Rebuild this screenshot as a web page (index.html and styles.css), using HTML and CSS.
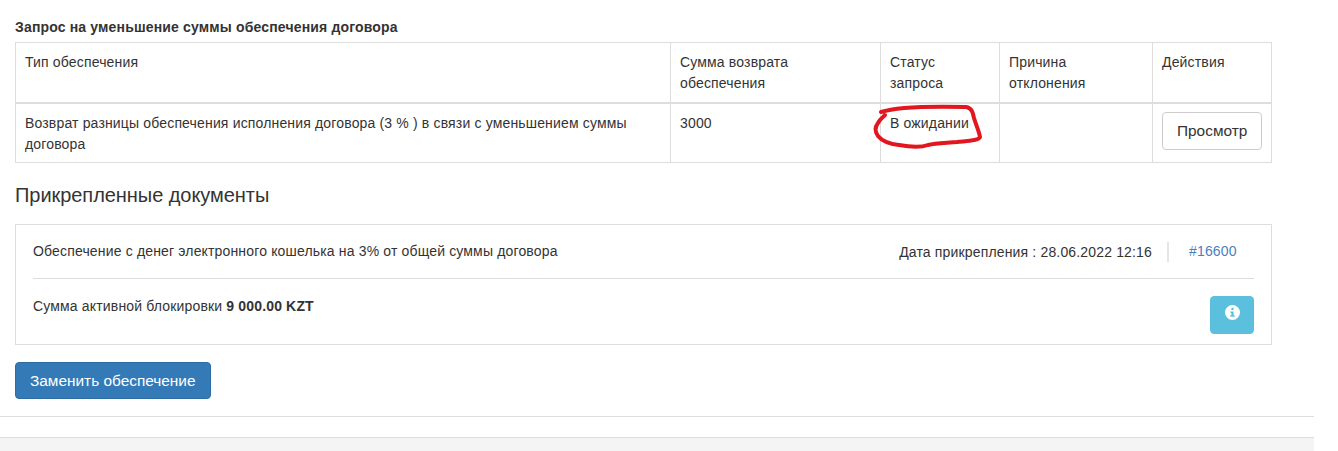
FILE: index.html
```html
<!DOCTYPE html>
<html lang="ru">
<head>
<meta charset="utf-8">
<title>Запрос на уменьшение суммы обеспечения договора</title>
<link rel="stylesheet" href="styles.css">
</head>
<body>
<div class="page">
  <main class="content">
    <h4 class="table-title">Запрос на уменьшение суммы обеспечения договора</h4>
    <div class="table-wrap">
      <table class="data-table">
        <colgroup>
          <col class="col-type"><col class="col-sum"><col class="col-status"><col class="col-reason"><col class="col-actions">
        </colgroup>
        <thead>
          <tr>
            <th>Тип обеспечения</th>
            <th>Сумма возврата обеспечения</th>
            <th>Статус запроса</th>
            <th>Причина отклонения</th>
            <th>Действия</th>
          </tr>
        </thead>
        <tbody>
          <tr>
            <td>Возврат разницы обеспечения исполнения договора (3 % ) в связи с уменьшением суммы договора</td>
            <td>3000</td>
            <td>В ожидании</td>
            <td></td>
            <td><button class="btn btn-default" type="button">Просмотр</button></td>
          </tr>
        </tbody>
      </table>
    </div>
    <h3 class="docs-title">Прикрепленные документы</h3>
    <section class="doc-panel">
      <div class="doc-head">
        <span class="doc-name">Обеспечение с денег электронного кошелька на 3% от общей суммы договора</span>
        <span class="doc-date">Дата прикрепления : 28.06.2022 12:16</span>
        <a class="doc-link" href="#">#16600</a>
      </div>
      <div class="doc-body">
        <span class="doc-sum">Сумма активной блокировки <b>9 000.00 KZT</b></span>
        <button class="btn btn-info" type="button" aria-label="Информация">
          <svg class="info-icon" viewBox="0 0 16 16" width="15" height="15" aria-hidden="true">
            <path fill="#fff" fill-rule="evenodd" d="M8 0a8 8 0 1 1 0 16A8 8 0 0 1 8 0Zm-1.2 3v2.400h2.400V3H6.800Zm-1 3.800v1.700h1v2.300h-1v1.700h4.400v-1.700h-1V6.800H5.800Z"/>
          </svg>
        </button>
      </div>
    </section>
    <button class="btn btn-primary" type="button">Заменить обеспечение</button>
  </main>
  <div class="gap"></div>
  <footer class="footer"></footer>
</div>
<svg class="scribble" width="120" height="60" viewBox="870 95 120 60" aria-hidden="true">
  <path d="M881 112C893 108 925 106 966 107C972 108 973 113 974 118C976 125 979 131 980 137C979 141 965 141 957 142C945 143 935 143 928 145C920 148 910 147 899 145C890 144 882 141 878 136C875 132 875 127 878 123C880 119 883 117 885 115" fill="none" stroke="#e2161e" stroke-width="4" stroke-linecap="round" stroke-linejoin="round"/>
</svg>
</body>
</html>
```
FILE: styles.css
```css
* { box-sizing: border-box; }
html, body { margin: 0; padding: 0; background: #fff; height: 451px; overflow: hidden; }
body {
  position: relative;
  font-family: "Liberation Sans", Arial, sans-serif;
  font-size: 14px;
  line-height: 21px;
  letter-spacing: 0.16px;
  color: #333;
}
.page { width: 1314px; }
.content { padding: 17px 42px 17px 15px; }
.table-title {
  margin: 0 0 5px;
  font-size: 14px;
  line-height: 20px;
  font-weight: 700;
}
.data-table {
  width: 1256px;
  table-layout: fixed;
  border-collapse: collapse;
}
.col-type { width: 655px; }
.col-sum { width: 210px; }
.col-status { width: 119px; }
.col-reason { width: 153px; }
.col-actions { width: 119px; }
.data-table th, .data-table td {
  border: 1px solid #ddd;
  padding: 9px 9px 7px;
  text-align: left;
  vertical-align: top;
  font-weight: 400;
}
.data-table th { border-bottom: 2px solid #ddd; padding-bottom: 8px; }
.btn {
  display: inline-block;
  border-radius: 4px;
  font-family: inherit;
  font-size: 15.4px;
  line-height: 24px;
  letter-spacing: 0;
  padding: 6px 14px;
  border: 1px solid transparent;
}
.btn-default { background: #fff; border-color: #ccc; color: #333; margin-top: -1px; }
.btn-primary { background: #337ab7; border-color: #2e6da4; color: #fff; height: 37px; padding: 5px 14px; }
.btn-info {
  background: #5bc0de;
  border-color: #5bc0de;
  color: #fff;
  width: 44px;
  height: 38px;
  padding: 0 0 5px;
  display: flex;
  align-items: center;
  justify-content: center;
}
.docs-title {
  margin: 19px 0 16px;
  font-size: 20px;
  line-height: 26px;
  font-weight: 400;
  letter-spacing: -0.05px;
}
.doc-panel {
  border: 1px solid #ddd;
  padding: 0 17px;
  height: 121px;
  margin-bottom: 17px;
}
.doc-head {
  display: flex;
  align-items: center;
  height: 54px;
  border-bottom: 1px solid #ddd;
}
.doc-name { flex: 1; }
.doc-date { padding-right: 15px; border-right: 2px solid #e5e5e5; line-height: 20px; }
.doc-link { color: #4a80bd; text-decoration: none; width: 85px; padding-left: 20px; }
.doc-body {
  display: flex;
  justify-content: space-between;
  align-items: flex-start;
  padding-top: 17px;
}
.gap { height: 0; border-top: 1px solid #ddd; }
.footer {
  margin-top: 20px;
  height: 14px;
  background: #f4f4f4;
  border-top: 1px solid #ddd;
}
.scribble { position: absolute; left: 870px; top: 95px; }
```
